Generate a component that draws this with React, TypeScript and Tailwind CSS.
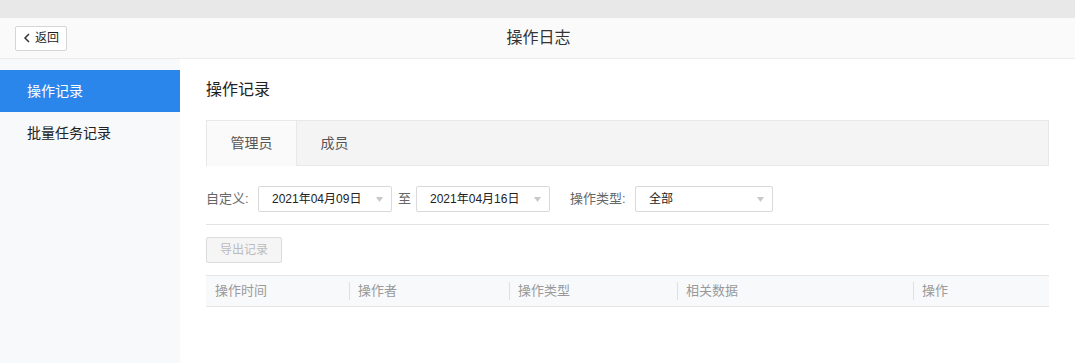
import React from "react";

const font = { fontFamily: '"Liberation Sans", "Noto Sans CJK SC", sans-serif' };

function Caret() {
  return (
    <svg width="7" height="5" viewBox="0 0 7 5" className="shrink-0">
      <path d="M0 0 L7 0 L3.5 5 Z" fill="#c8c8c8" />
    </svg>
  );
}

function Select({ value, width }: { value: string; width: string }) {
  return (
    <div
      className={`${width} h-[26px] flex items-center justify-between pl-[13px] pr-[8px] border border-[#d9d9d9] rounded-[2px] bg-white text-[12px] text-[#222]`}
    >
      <span>{value}</span>
      <Caret />
    </div>
  );
}

const columns = [
  { label: "操作时间", w: "w-[143px]" },
  { label: "操作者", w: "w-[160px]" },
  { label: "操作类型", w: "w-[168px]" },
  { label: "相关数据", w: "w-[236px]" },
  { label: "操作", w: "flex-1" },
];

export default function App() {
  return (
    <div className="w-[1075px] h-[363px] bg-white overflow-hidden flex flex-col" style={font}>
      <div className="h-[18px] bg-[#e8e8e8] shrink-0" />

      {/* header */}
      <div className="h-[41px] shrink-0 bg-[#fafafa] border-b border-[#ebebeb] relative flex items-center px-[15px]">
        <button className="h-[25px] w-[52px] flex items-center justify-center gap-[4px] border border-[#d6d6d6] rounded-[2px] bg-white text-[12px] text-[#222]">
          <svg width="8" height="10" viewBox="0 0 8 10">
            <path d="M6 1 L2 5 L6 9" fill="none" stroke="#333" strokeWidth="1.5" />
          </svg>
          <span>返回</span>
        </button>
        <div className="absolute left-0 right-0 text-center text-[16px] text-[#333] pointer-events-none pl-[2px]">
          操作日志
        </div>
      </div>

      <div className="flex flex-1">
        {/* sidebar */}
        <div className="w-[180px] shrink-0 bg-[#f8f9fb] pt-[11px]">
          <div className="h-[42px] bg-[#2b86ec] text-white text-[14px] flex items-center pl-[27px]">操作记录</div>
          <div className="h-[42px] text-[#222] text-[14px] flex items-center pl-[27px]">批量任务记录</div>
        </div>

        {/* main */}
        <div className="flex-1 pl-[26px] pr-[26px]">
          <div className="text-[16px] text-[#222] mt-[20px] leading-[22px]">操作记录</div>

          <div className="mt-[19px] h-[46px] bg-[#f4f4f4] border border-[#e8e8e8] flex">
            <div className="w-[91px] h-[46px] -mt-px -ml-px bg-[#fafafa] border-l border-t border-r border-[#e8e8e8] flex items-center justify-center text-[14px] text-[#555]">
              管理员
            </div>
            <div className="w-[75px] flex items-center justify-center text-[14px] text-[#555]">成员</div>
          </div>

          <div className="mt-[20px] flex items-center h-[26px] text-[13px] text-[#666]">
            <span className="w-[52px]">自定义:</span>
            <Select value="2021年04月09日" width="w-[134px]" />
            <span className="ml-[6px] mr-[5px]">至</span>
            <Select value="2021年04月16日" width="w-[134px]" />
            <span className="ml-[20px] w-[65px]">操作类型:</span>
            <Select value="全部" width="w-[138px]" />
          </div>

          <div className="mt-[12px] border-t border-[#e3e3e3]" />

          <button className="mt-[12px] h-[26px] w-[76px] border border-[#dcdcdc] rounded-[2px] bg-[#f5f5f5] text-[12px] text-[#bbb]">
            导出记录
          </button>

          <div className="mt-[12px] h-[32px] bg-[#f8f9fb] border-t border-b border-[#e6e6e6] flex items-center text-[13px] text-[#999]">
            {columns.map((c, i) => (
              <div key={c.label} className={`${c.w} flex items-center h-[18px]`}>
                {i > 0 && <div className="w-px h-[18px] bg-[#e0e0e0] mr-[8px]" />}
                <span className={i === 0 ? "pl-[9px]" : ""}>{c.label}</span>
              </div>
            ))}
          </div>
        </div>
      </div>
    </div>
  );
}
